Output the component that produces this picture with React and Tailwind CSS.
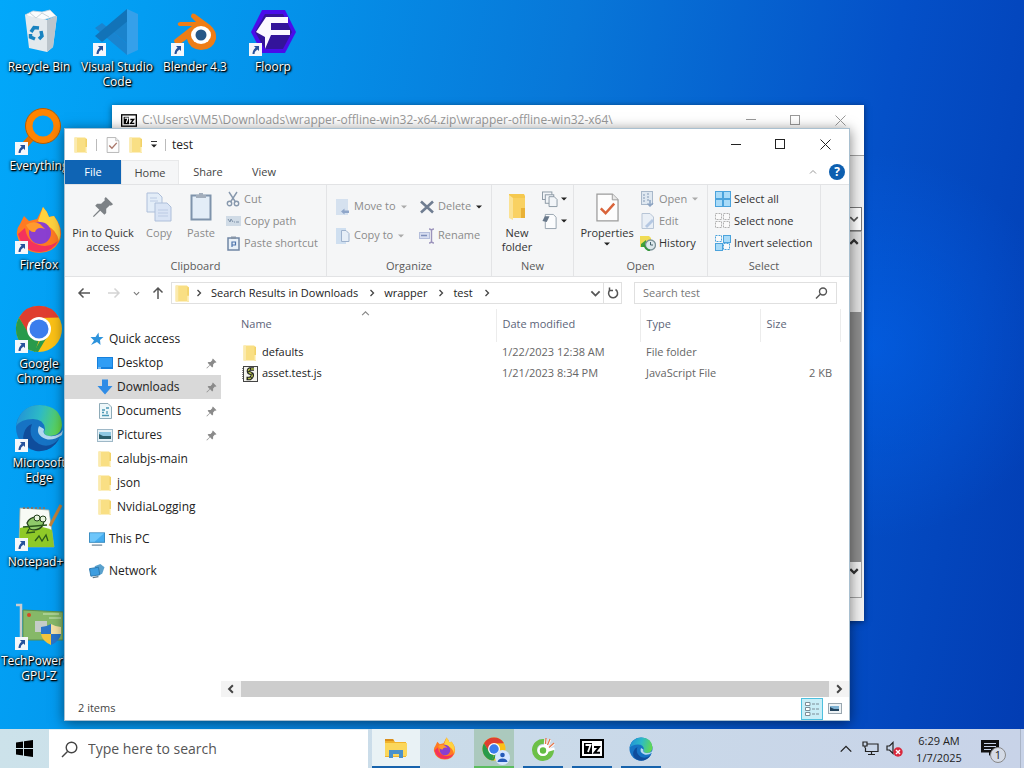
import React from 'react';

// Small shared glyphs
const Chevron = ({ dir = 'right', size = 8, color = '#444', width = 1.3 }) => {
  const paths = {
    right: 'M2.5 1 L5.5 4 L2.5 7',
    left: 'M5.5 1 L2.5 4 L5.5 7',
    down: 'M1 2.5 L4 5.5 L7 2.5',
    up: 'M1 5.5 L4 2.5 L7 5.5',
  };
  return (
    <svg width={size} height={size} viewBox="0 0 8 8" fill="none" stroke={color} strokeWidth={width}>
      <path d={paths[dir]} />
    </svg>
  );
};

const Caret = ({ color = '#222' }) => (
  <svg width="6" height="4" viewBox="0 0 6 4"><path d="M0 0.5 H6 L3 3.5 Z" fill={color} /></svg>
);

const FolderIcon = ({ size = 16 }) => (
  <svg width={size} height={size} viewBox="0 0 16 16">
    <path d="M1.500 0.500 H12 L14 2 V15.500 H1.500 Z" fill="#f9df84" />
    <path d="M1.500 0.500 H4 V15.500 H1.500 Z" fill="#fbeaae" />
    <path d="M12.500 2 H14 V15.500 H12.500 Z" fill="#f2d268" />
    <path d="M12.500 10 V15.500 H14 V10 Z" fill="#fff3c4" />
  </svg>
);

const SevenZipIcon = ({ width = 16, height = 13 }) => (
  <svg width={width} height={height} viewBox="0 0 24 19">
    <rect x="1" y="1" width="22" height="17" fill="#fff" stroke="#000" strokeWidth="2" />
    <rect x="4" y="4" width="8" height="11" fill="#000" />
    <path d="M5.5 6 H10.5 L8 13" fill="none" stroke="#fff" strokeWidth="1.8" />
    <path d="M14 8 H19 L14.5 13.8 H20" fill="none" stroke="#000" strokeWidth="2" />
  </svg>
);

const PinIcon = ({ size = 11, color = '#8a8a8a' }) => (
  <svg width={size} height={size} viewBox="0 0 24 24" fill={color}>
    <path d="M15 1 L23 9 L20.5 10.5 L19.5 10 L15.5 14 L15.5 18.5 L13.5 20.5 L9 16 L2 23 L1 22 L8 15 L3.5 10.5 L5.5 8.5 L10 8.5 L14 4.5 L13.5 3 Z" />
  </svg>
);

const PageCheckIcon = ({ width = 14, height = 16, check = '#d9643a' }) => (
  <svg width={width} height={height} viewBox="0 0 24 30">
    <path d="M1 1 H17 L23 7 V29 H1 Z" fill="#fdfdfd" stroke="#9b9b9b" strokeWidth="1.3" />
    <path d="M17 1 V7 H23" fill="#e8e8e8" stroke="#9b9b9b" />
    <path d="M5 16 L10 21 L19 11" fill="none" stroke={check} strokeWidth="2.6" />
  </svg>
);

// Desktop icons
const RecycleBinIcon = () => (
  <svg width="48" height="48" viewBox="0 0 48 48">
    <path d="M10 7 L18 3 L27 4 L35 2 L41 8 L25 13 Z" fill="#fafcfd" stroke="#c6d2da" strokeWidth="0.8" />
    <path d="M10 7 L32 12 L42 8 L38 39 L32 44 L14 40 Z" fill="#e3e9ed" />
    <path d="M32 12 L42 8 L38 39 L32 44 Z" fill="#bcc5cc" />
    <path d="M15 5 L21 10 L27 5 L34 9" fill="none" stroke="#c9d3d9" />
    <g fill="none" stroke="#1983c0" strokeWidth="3.5">
      <path d="M16 24 L19 19.500 L24 20" />
      <path d="M26 23 L27 28 L24 31" />
      <path d="M20 31 L15.500 29 L15.500 26" />
    </g>
  </svg>
);

const VsCodeIcon = () => (
  <svg width="48" height="48" viewBox="0 0 48 48">
    <path d="M20 24 L36 11 V37 Z" fill="#1a83cc" />
    <path d="M2 20 L9 15 L36 37 L34 47 Z" fill="#1a84cf" />
    <path d="M2 28 L9 34 L36 12 L34 1 Z" fill="#1273b8" />
    <path d="M34 1 L45 6 V42 L34 47 Z" fill="#35a0ea" />
  </svg>
);

const BlenderIcon = () => (
  <svg width="48" height="48" viewBox="0 0 48 48">
    <path d="M3 32 L21 18 L8 18 Q5 15 9 14 L25 14 L20 9 Q20 4 24 6 L39 17 Q46 23 45 31 Q42 42 30 42 Q18 41 16 31 L9 36 Q3 37 3 32 Z" fill="#ee7d16" />
    <ellipse cx="30" cy="27" rx="10" ry="9" fill="#fff" />
    <circle cx="30" cy="27" r="5.500" fill="#265787" />
  </svg>
);

const FloorpIcon = () => (
  <svg width="48" height="48" viewBox="0 0 48 48">
    <path d="M13 2 H36 L47 24 L36 45 H13 L2 24 Z" fill="#4a0cea" />
    <path d="M16 6 H34 L43 24 L34 41 H16 L6 24 Z" fill="#33149a" />
    <path d="M7 24 L17 9 H39 V15 H22 V22 H41 V27 H22 L16 41 V29 Z" fill="#fbf8ff" />
  </svg>
);

const EverythingIcon = () => (
  <svg width="48" height="48" viewBox="0 0 48 48">
    <path d="M18 29 L8 40" stroke="#e06f00" strokeWidth="7" />
    <circle cx="28" cy="19" r="14" fill="none" stroke="#ff8400" strokeWidth="7" />
    <circle cx="28" cy="19" r="17.500" fill="none" stroke="#b85c00" strokeWidth="1" />
  </svg>
);

const FirefoxIcon = ({ size = 48 }) => (
  <svg width={size} height={size} viewBox="0 0 48 48">
    <path d="M5 18 L9 10 L14 15 L22 13 L28 1 Q32 5 34 11 L39 10 Q50 24 44 36 Q38 47 24 47 Q6 46 2 29 Q1 23 5 18 Z" fill="#ff7a22" />
    <path d="M28 1 Q32 5 34 11 L39 10 Q48 22 44 35 Q41 23 32 20 L23 15 Z" fill="#ffd23e" />
    <path d="M3 28 Q8 46 26 46 Q38 45 43 35 Q34 42 24 39 Q12 36 10 22 Z" fill="#f4325d" />
    <circle cx="25" cy="27" r="11" fill="#8a3fd0" />
    <path d="M11 19 Q18 14 25 18 L30 23 Q22 20 20 26 Q15 27 11 19 Z" fill="#ff9a2e" />
  </svg>
);

const ChromeIcon = ({ size = 48 }) => (
  <svg width={size} height={size} viewBox="0 0 48 48">
    <circle cx="24" cy="24" r="23" fill="#fbc116" />
    <path d="M4 12.500 A23 23 0 0 1 44 12.500 L24 13 L14 30 Z" fill="#df3e30" />
    <path d="M4 12.500 L14.500 30 L24 35 L20 46.700 A23 23 0 0 1 4 12.500 Z" fill="#299a4b" />
    <path d="M33.500 29.500 L23 47 L19 46.500 L26 34 Z" fill="#299a4b" />
    <circle cx="24" cy="24" r="12" fill="#fff" />
    <circle cx="24" cy="24" r="9.500" fill="#3b7ded" />
  </svg>
);

const EdgeIcon = ({ size = 48, id }) => (
  <svg width={size} height={size} viewBox="0 0 48 48">
    <defs>
      <linearGradient id={id} x1="0" y1="0.300" x2="1" y2="0.500">
        <stop offset="0" stopColor="#2191d8" />
        <stop offset="0.500" stopColor="#2dbac6" />
        <stop offset="1" stopColor="#62d94f" />
      </linearGradient>
    </defs>
    <circle cx="24" cy="24" r="23" fill="#1673c4" />
    <path d="M1 22 Q5 1 25 1 Q46 2 47 21 Q46 32 34 32 Q27 31 30 25 Q29 15 18 15 Q6 15 1 22 Z" fill={`url(#${id})`} />
    <path d="M17 20 Q12 33 24 40 Q35 45 44 35 Q36 49 21 47 Q5 42 9 29 Q11 22 17 20 Z" fill="#0f4d9c" />
    <path d="M24 22 Q20 31 31 35 Q38 37 47 31 L48 26 Q44 33 34 32 Q27 31 29 25 Z" fill="#d9f1fb" opacity="0.8" />
  </svg>
);

const NotepadIcon = () => (
  <svg width="48" height="48" viewBox="0 0 48 48">
    <path d="M5 5 L34 7 L39 44 L4 44 Z" fill="#f8fbf5" stroke="#9aa79a" strokeWidth="0.8" />
    <path d="M5 25 Q20 20 37 27 L39 44 H4 Z" fill="#8fc928" />
    <path d="M12 20 Q15 13 24 14 Q31 16 28 22 Q23 29 15 26 Z" fill="#8fc96a" stroke="#23401b" strokeWidth="1.300" />
    <circle cx="22" cy="15" r="3" fill="#e8f5dd" stroke="#23401b" />
    <circle cx="28" cy="16" r="3" fill="#e8f5dd" stroke="#23401b" />
    <path d="M8 24 L32 22 M14 26 L12 30 L20 29 M20 38 L24 33 L27 38 L31 32 L33 38" fill="none" stroke="#2a5a1c" strokeWidth="1.300" />
    <path d="M46 2 L35 23" stroke="#c2823c" strokeWidth="3" />
    <path d="M8 5 H30" stroke="#777" strokeDasharray="2 2" strokeWidth="2" />
  </svg>
);

const GpuIcon = () => (
  <svg width="48" height="48" viewBox="0 0 48 48">
    <path d="M1 3 H6 V40" fill="none" stroke="#c9ccce" strokeWidth="2.500" />
    <path d="M8 8 L48 10 V38 L8 38 Z" fill="#86b868" stroke="#5d8f4c" />
    <rect x="20" y="19" width="12" height="11" fill="#c5ccc9" />
    <circle cx="14" cy="13" r="2" fill="#d44a25" />
    <path d="M28 12 H44 M34 16 H46" stroke="#b5d8a0" strokeWidth="1.500" />
    <path d="M36 22 Q31 25 26 25 V32 H36 Z" fill="#2b75c9" />
    <path d="M36 22 Q41 25 46 25 V32 H36 Z" fill="#f6e2a5" />
    <path d="M26 32 H36 V43 Q27 39 26 32 Z" fill="#f4c43c" />
    <path d="M46 32 H36 V43 Q45 39 46 32 Z" fill="#2b75c9" />
  </svg>
);

const ShortcutArrow = () => (
  <svg className="absolute bottom-0 left-0" width="13" height="13" viewBox="0 0 13 13">
    <rect width="13" height="13" fill="#f4f7fb" />
    <path d="M5 3 H10 V8 L8.400 6.400 Q5.500 8 5.500 11 H3.500 Q3.500 7 6.600 4.700 Z" fill="#27529c" />
  </svg>
);

const desktopIcons = [
  { label: 'Recycle Bin', icon: <RecycleBinIcon />, shortcut: false },
  { label: 'Everything', icon: <EverythingIcon />, shortcut: true },
  { label: 'Firefox', icon: <FirefoxIcon />, shortcut: true },
  { label: 'Google Chrome', icon: <ChromeIcon />, shortcut: true },
  { label: 'Microsoft Edge', icon: <EdgeIcon id="edge-desktop" />, shortcut: true },
  { label: 'Notepad++', icon: <NotepadIcon />, shortcut: true },
  { label: 'TechPowerUp GPU-Z', icon: <GpuIcon />, shortcut: true },
  { label: 'Visual Studio Code', icon: <VsCodeIcon />, shortcut: true, top: true },
  { label: 'Blender 4.3', icon: <BlenderIcon />, shortcut: true, top: true },
  { label: 'Floorp', icon: <FloorpIcon />, shortcut: true, top: true },
];

const DesktopIcons = () => (
  <div className="grid grid-flow-col grid-rows-[repeat(7,99px)] auto-cols-[78px] w-max pt-2">
    {desktopIcons.map((item) => (
      <button key={item.label} className={`flex flex-col items-center ${item.top ? 'row-start-1' : ''}`}>
        <span className="relative block h-12 w-12">
          {item.icon}
          {item.shortcut && <ShortcutArrow />}
        </span>
        <span className="mt-[3px] w-[76px] text-center text-xs leading-[15px] text-white [text-shadow:1px_1px_1px_#000,1px_1px_2px_#000,0_0_3px_#000]">
          {item.label}
        </span>
      </button>
    ))}
  </div>
);

// Window caption buttons
const CaptionButtons = ({ color }) => (
  <div className="flex h-full pr-px">
    <button aria-label="Minimize" className="flex w-[45px] items-center justify-center">
      <svg width="10" height="10" stroke={color}><path d="M0 4.5 H10" /></svg>
    </button>
    <button aria-label="Maximize" className="flex w-[45px] items-center justify-center">
      <svg width="11" height="11" fill="none" stroke={color}><rect x="0.500" y="0.500" width="9" height="9" /></svg>
    </button>
    <button aria-label="Close" className="flex w-[45px] items-center justify-center">
      <svg width="11" height="11" stroke={color}><path d="M0.500 0.500 L10.500 10.500 M10.500 0.500 L0.500 10.500" /></svg>
    </button>
  </div>
);

// 7-Zip window that sits behind the explorer
const SevenZipWindow = () => (
  <section className="absolute left-[112px] right-40 top-[105px] bottom-[147px] flex flex-col bg-[#f0f0f0] shadow-[0_1px_6px_rgba(0,0,0,0.5)]">
    <div className="flex h-[30px] items-center justify-between bg-white pl-[9px]">
      <div className="flex min-w-0 items-center gap-[5px]">
        <SevenZipIcon />
        <span className="whitespace-nowrap text-xs text-[#999]">
          C:\Users\VM5\Downloads\wrapper-offline-win32-x64.zip\wrapper-offline-win32-x64\
        </span>
      </div>
      <CaptionButtons color="#999" />
    </div>
    <div className="h-[21px] border-b border-[#a0a0a0] bg-white" />
    <div className="h-[51px]" />
    <div className="mx-0.5 flex h-6 items-center justify-end border border-[#777] bg-white pr-0.5">
      <Chevron dir="down" size={10} color="#555" />
    </div>
    <div className="mx-0.5 flex flex-1 flex-col border border-[#a0a0a0] bg-[#f0f0f0]">
      <div className="flex h-20 justify-end bg-[#e0e0e0] pr-0.5 pt-[5px]">
        <Chevron dir="up" size={10} color="#333" width={1.8} />
      </div>
      <div className="flex-1 bg-[#8c8c8c]" />
      <div className="flex h-[35px] justify-end pr-0.5 pt-1">
        <Chevron dir="down" size={10} color="#333" width={1.8} />
      </div>
    </div>
    <div className="h-[23px]" />
  </section>
);

// Ribbon parts
const RibbonGroup = ({ label, width, children }) => (
  <div className={`flex flex-col border-r border-[#e3e4e6] ${width}`}>
    <div className="flex flex-1 pt-[3px]">{children}</div>
    <div className="h-[18px] text-center leading-4 text-[#5a5a5a]">{label}</div>
  </div>
);

const LargeButton = ({ icon, label, width, dim, caret }) => (
  <button className={`flex flex-col items-center ${width} ${dim ? 'text-[#8b8b8b]' : 'text-[#333]'}`}>
    <span className="flex h-[38px] items-center justify-center">{icon}</span>
    <span className="text-center leading-[14px]">{label}</span>
    {caret && <span className="mt-0.5"><Caret /></span>}
  </button>
);

const SmallButton = ({ icon, label, dim, caret, height = 'h-[22px]' }) => (
  <button className={`flex items-center gap-[3px] whitespace-nowrap ${height} ${dim ? 'text-[#8b8b8b]' : 'text-[#333]'}`}>
    <span className="flex w-4 shrink-0 justify-center">{icon}</span>
    {label && <span>{label}</span>}
    {caret && <span className={label ? 'pl-0.5' : ''}><Caret color={caret} /></span>}
  </button>
);

const CopyIcon = () => (
  <svg width="26" height="30" viewBox="0 0 26 30" fill="#e3edf8" stroke="#aebfda">
    <path d="M1 1 H12 L16 5 V20 H1 Z" />
    <path d="M9 11 H21 L25 15 V29 H9 Z" fill="#d9e4f5" />
    <path d="M12 18 H22 M12 21 H22 M12 24 H22 M4 6 H11 M4 9 H12" stroke="#bccbe4" />
  </svg>
);

const PasteIcon = () => (
  <svg width="22" height="30" viewBox="0 0 22 30">
    <rect x="1.500" y="3.500" width="19" height="24" fill="#e3edf7" stroke="#7f93ab" strokeWidth="2" />
    <path d="M6 3 H9 V1 H13 V3 H16 V6 H6 Z" fill="#a3aebc" />
  </svg>
);

const CutIcon = () => (
  <svg width="14" height="16" viewBox="0 0 14 16" fill="none" stroke="#8798ad" strokeWidth="1.400">
    <path d="M3 1 L9.500 11 M11 1 L4.500 11" />
    <circle cx="3.500" cy="12.500" r="2.200" /><circle cx="10.500" cy="12.500" r="2.200" />
  </svg>
);

const CopyPathIcon = () => (
  <svg width="15" height="10" viewBox="0 0 15 10">
    <rect width="15" height="10" fill="#d0dbe6" />
    <path d="M2 3 L4 6 L5 3 L7 6 M8 6 H9 M10 6 H13" fill="none" stroke="#7e91a8" />
  </svg>
);

const PasteShortcutIcon = () => (
  <svg width="13" height="15" viewBox="0 0 13 15">
    <rect x="1" y="2" width="11" height="12" fill="#e8f0f8" stroke="#7086a5" strokeWidth="1.500" />
    <path d="M4 0.500 H9 V3 H4 Z" fill="#8795a7" />
    <path d="M5 11 V6 H8.500 V9 H5" fill="none" stroke="#4c73ab" strokeWidth="1.200" />
  </svg>
);

const MoveToIcon = () => (
  <svg width="14" height="16" viewBox="0 0 14 16">
    <rect width="12" height="16" fill="#d5e1ef" />
    <path d="M5 12.500 L8.500 9.500 V11.500 H13 V14 H8.500 V15.500 Z" fill="#8fa6c9" />
  </svg>
);

const CopyToIcon = () => (
  <svg width="14" height="16" viewBox="0 0 14 16">
    <rect width="10" height="16" fill="#cfdff0" />
    <path d="M5.500 2.500 H10 L13 5.500 V13.500 H5.500 Z" fill="#e6eef7" stroke="#9eb2cd" />
  </svg>
);

const DeleteIcon = () => (
  <svg width="14" height="14" viewBox="0 0 14 14" stroke="#6f7d91" strokeWidth="2.600">
    <path d="M1 1.500 L13 12.500 M13 1.500 L1 12.500" />
  </svg>
);

const RenameIcon = () => (
  <svg width="16" height="16" viewBox="0 0 16 16" fill="none">
    <rect x="0.500" y="4.500" width="10" height="6" fill="#d7def0" stroke="#b4bedb" />
    <path d="M2 7.500 H8" stroke="#7e8fba" strokeWidth="1.500" />
    <path d="M10 1 Q12.500 1 12.500 3 V13 Q12.500 15 10 15 M15 1 Q12.500 1 12.500 3 M15 15 Q12.500 15 12.500 13" stroke="#9b93bb" strokeWidth="1.400" />
  </svg>
);

const NewFolderIcon = () => (
  <svg width="20" height="28" viewBox="0 0 20 28">
    <path d="M2 1 H17 L18 3 V25 H2 Z" fill="#f5c94f" />
    <path d="M2 2 L6 5 V27 L2 25 Z" fill="#fbe294" />
    <path d="M6 5 H18 V25 H6 Z" fill="#f9d162" />
    <path d="M14 15 H18 V25 H14 Z" fill="#e9b136" />
  </svg>
);

const NewItemIcon = () => (
  <svg width="17" height="17" viewBox="0 0 17 17" fill="#f2f5f8" stroke="#8a97a3">
    <rect x="0.500" y="0.500" width="10" height="8" />
    <rect x="3.500" y="3.500" width="9" height="9" />
    <path d="M7.500 5.500 H13 L16 8.500 V16 H7.500 Z" />
  </svg>
);

const EasyAccessIcon = () => (
  <svg width="17" height="17" viewBox="0 0 17 17">
    <path d="M3.500 1 H12 L15 4 V16 H3.500 Z" fill="#fbfcfd" stroke="#93a0ac" />
    <path d="M0.500 8 L3 3 H8 L5 9 Z" fill="#68788a" />
  </svg>
);

const OpenIcon = () => (
  <svg width="14" height="16" viewBox="0 0 14 16">
    <rect x="0.500" y="0.500" width="11" height="13" fill="#dfe8f1" stroke="#a8b8ca" />
    <path d="M3 3 V11 M6 3 H9 M6 6 H9 M6 9 H9" stroke="#8399b5" strokeDasharray="2 1" />
    <path d="M9 9 V15 M6.500 12.500 L9 15 L12 12" fill="none" stroke="#8da4c2" strokeWidth="1.500" />
  </svg>
);

const EditIcon = () => (
  <svg width="14" height="16" viewBox="0 0 14 16">
    <path d="M1 0.500 H9 L12.500 4 V15.500 H1 Z" fill="#e9eff6" stroke="#b7c5d6" />
    <path d="M4 13 L11 6 L13 8 L6 15 Z" fill="#b5c8e2" />
  </svg>
);

const HistoryIcon = () => (
  <svg width="16" height="16" viewBox="0 0 16 16">
    <path d="M0 1 H9 L11 3 V12 H0 Z" fill="#f0dc55" />
    <path d="M1 9 L6 5 V12 H1 Z" fill="#41a03b" />
    <circle cx="10.500" cy="10" r="5" fill="#dce8ec" stroke="#7b9299" strokeWidth="1.300" />
    <path d="M10.500 7 V10 H13" fill="none" stroke="#49656f" />
    <path d="M4 10 Q6 15 10 15.500" fill="none" stroke="#35963d" strokeWidth="2" />
  </svg>
);

const SelectIcon = ({ mode }) => {
  const cells = [[0, 0], [8, 0], [0, 8], [8, 8]];
  return (
    <svg width="16" height="16" viewBox="0 0 16 16">
      {cells.map(([x, y], i) => {
        const on = mode === 'all' || (mode === 'invert' && (i === 1 || i === 2));
        return (
          <rect
            key={i}
            x={x + 0.5}
            y={y + 0.5}
            width={on ? 7 : 6}
            height={on ? 7 : 6}
            fill={on ? '#a9dbf8' : '#fafafa'}
            stroke={mode === 'none' ? '#b0b0b0' : '#4ba3dc'}
            strokeDasharray={on ? undefined : '2 1'}
          />
        );
      })}
    </svg>
  );
};

const Ribbon = () => (
  <div className="flex h-[93px] border-y border-[#e2e3e5] bg-[#f5f6f7]">
    <RibbonGroup label="Clipboard" width="w-[262px]">
      <LargeButton width="w-[76px]" icon={<PinIcon size={22} color="#7d8286" />} label={<>Pin to Quick<br />access</>} />
      <LargeButton width="w-9" dim icon={<CopyIcon />} label="Copy" />
      <LargeButton width="w-12" dim icon={<PasteIcon />} label="Paste" />
      <div className="flex flex-col">
        <SmallButton dim icon={<CutIcon />} label="Cut" />
        <SmallButton dim icon={<CopyPathIcon />} label="Copy path" />
        <SmallButton dim icon={<PasteShortcutIcon />} label="Paste shortcut" />
      </div>
    </RibbonGroup>
    <RibbonGroup label="Organize" width="w-[165px]">
      <div className="flex w-[84px] flex-col pl-2 pt-1">
        <SmallButton dim caret="#aaa" height="h-[29px]" icon={<MoveToIcon />} label="Move to" />
        <SmallButton dim caret="#aaa" height="h-[29px]" icon={<CopyToIcon />} label="Copy to" />
      </div>
      <div className="flex flex-col pl-2 pt-1">
        <SmallButton dim caret="#222" height="h-[29px]" icon={<DeleteIcon />} label="Delete" />
        <SmallButton dim height="h-[29px]" icon={<RenameIcon />} label="Rename" />
      </div>
    </RibbonGroup>
    <RibbonGroup label="New" width="w-[82px]">
      <LargeButton width="w-[50px]" icon={<NewFolderIcon />} label={<>New<br />folder</>} />
      <div className="flex flex-col">
        <SmallButton caret="#222" icon={<NewItemIcon />} />
        <SmallButton caret="#222" icon={<EasyAccessIcon />} />
      </div>
    </RibbonGroup>
    <RibbonGroup label="Open" width="w-[134px]">
      <LargeButton width="w-[66px]" caret icon={<PageCheckIcon width={23} height={29} />} label="Properties" />
      <div className="flex flex-col">
        <SmallButton dim caret="#aaa" icon={<OpenIcon />} label="Open" />
        <SmallButton dim icon={<EditIcon />} label="Edit" />
        <SmallButton icon={<HistoryIcon />} label="History" />
      </div>
    </RibbonGroup>
    <RibbonGroup label="Select" width="w-[113px]">
      <div className="flex flex-col pl-[7px]">
        <SmallButton icon={<SelectIcon mode="all" />} label="Select all" />
        <SmallButton icon={<SelectIcon mode="none" />} label="Select none" />
        <SmallButton icon={<SelectIcon mode="invert" />} label="Invert selection" />
      </div>
    </RibbonGroup>
  </div>
);

const TitleBar = () => (
  <div className="flex h-[31px] items-center justify-between">
    <div className="flex items-center pl-2">
      <FolderIcon />
      <span className="ml-[7px] h-3 border-l border-[#bbb]" />
      <span className="ml-[9px]"><PageCheckIcon check="#a9776a" /></span>
      <span className="ml-2"><FolderIcon /></span>
      <button aria-label="Customize toolbar" className="ml-[7px] flex flex-col items-center gap-0.5">
        <span className="h-px w-1.5 bg-[#333]" />
        <Caret />
      </button>
      <span className="ml-2 h-3 border-l border-[#bbb]" />
      <span className="ml-1.5 text-xs text-[#222]">test</span>
    </div>
    <CaptionButtons color="#222" />
  </div>
);

const Tabs = () => (
  <div className="flex h-6 items-stretch text-[#444]">
    <button className="w-14 bg-[#0f64b4] text-white">File</button>
    <button className="-mb-px w-[58px] border-x border-t border-[#e8e9ea] bg-[#f5f6f7]">Home</button>
    <button className="w-[58px]">Share</button>
    <button className="w-[54px]">View</button>
    <div className="ml-auto flex items-center gap-3 pr-1">
      <button aria-label="Collapse ribbon"><Chevron dir="up" color="#999" width={1} /></button>
      <button aria-label="Help" className="h-4 w-4 rounded-full bg-[#0d5fb0] text-xs font-bold leading-4 text-white">?</button>
    </div>
  </div>
);

const AddressBar = () => (
  <div className="flex h-8 items-center pr-3">
    <div className="flex w-[106px] items-center pl-3">
      <button aria-label="Back">
        <svg width="14" height="12" fill="none" stroke="#555" strokeWidth="1.500"><path d="M13 6 H2 M6.500 1.500 L2 6 L6.500 10.500" /></svg>
      </button>
      <button aria-label="Forward" className="ml-4">
        <svg width="14" height="12" fill="none" stroke="#d4d4d4" strokeWidth="1.500"><path d="M1 6 H12 M7.500 1.500 L12 6 L7.500 10.500" /></svg>
      </button>
      <button aria-label="Recent locations" className="ml-3"><Chevron dir="down" size={7} color="#777" /></button>
      <button aria-label="Up" className="ml-3">
        <svg width="12" height="14" fill="none" stroke="#555" strokeWidth="1.500"><path d="M6 13 V2 M1.500 6.500 L6 2 L10.500 6.500" /></svg>
      </button>
    </div>
    <div className="flex h-[22px] flex-1 items-center border border-[#e0e0e0] text-[#222]">
      <span className="ml-0.5"><FolderIcon size={17} /></span>
      <span className="ml-1"><Chevron /></span>
      <a href="#downloads" className="ml-2">Search Results in Downloads</a>
      <span className="ml-2.5"><Chevron /></span>
      <a href="#wrapper" className="ml-2">wrapper</a>
      <span className="ml-2.5"><Chevron /></span>
      <a href="#test" className="ml-2">test</a>
      <span className="ml-2.5"><Chevron /></span>
      <button aria-label="Previous locations" className="ml-auto mr-0.5"><Chevron dir="down" size={11} color="#555" /></button>
      <button aria-label="Refresh" className="flex h-full w-[18px] items-center justify-center border-l border-[#e0e0e0]">
        <svg width="12" height="12" fill="none" stroke="#555" strokeWidth="1.500">
          <path d="M8.500 2.500 A4.500 4.500 0 1 1 3 3" /><path d="M2.500 0.500 V3.500 H6" />
        </svg>
      </button>
    </div>
    <label className="ml-3 flex h-[22px] w-[203px] items-center border border-[#e0e0e0] pr-2">
      <input type="text" aria-label="Search test" placeholder="Search test" className="min-w-0 flex-1 bg-transparent pl-2 outline-none placeholder:text-[#777]" />
      <svg width="13" height="12" fill="none" stroke="#555" strokeWidth="1.400"><circle cx="8" cy="4.500" r="3.500" /><path d="M5.500 7 L1 11.500" /></svg>
    </label>
  </div>
);

// Navigation pane icons
const StarIcon = () => (
  <svg width="14" height="14" viewBox="0 0 14 14">
    <path d="M8.500 0.500 L9 5 H13.500 L10 8 L10.500 13 L7 10 L1 13 L4 8.500 L0.500 5 H5.500 Z" fill="#2d93dc" />
  </svg>
);

const DesktopIcon = () => (
  <svg width="16" height="13" viewBox="0 0 16 13">
    <rect width="16" height="12" fill="#1680dc" /><rect x="1" y="1" width="14" height="9" fill="#2f9df5" /><path d="M1 11 H4" stroke="#d5ecff" />
  </svg>
);

const DownloadsIcon = () => (
  <svg width="16" height="16" viewBox="0 0 16 16">
    <path d="M5 0.500 H11 V7 H15.500 L8 15.500 L0.500 7 H5 Z" fill="#2f8ce6" />
  </svg>
);

const DocumentsIcon = () => (
  <svg width="13" height="16" viewBox="0 0 13 16">
    <path d="M0.500 0.500 H9 L12.500 4 V15.500 H0.500 Z" fill="#edf7fa" stroke="#8eabb8" />
    <path d="M3 7 H6 M3 9.500 H5 M3 12.500 H10 M7 5 H10 M8 8 V11" stroke="#4b98b4" strokeWidth="1.300" />
  </svg>
);

const PicturesIcon = () => (
  <svg width="16" height="13" viewBox="0 0 16 13">
    <rect x="0.500" y="0.500" width="15" height="12" fill="#e6f1f7" stroke="#9eb8c7" />
    <rect x="2" y="3" width="12" height="7" fill="#8fc8e2" />
    <path d="M2 10 V5 L6 7 L14 7 V10 Z" fill="#2b5e6b" />
  </svg>
);

const ThisPcIcon = () => (
  <svg width="17" height="16" viewBox="0 0 17 16">
    <rect x="0.500" y="1.500" width="16" height="10" fill="#45adf0" stroke="#3587bd" />
    <path d="M1 2 H16 L6 11 H1 Z" fill="#6ec6fa" />
    <path d="M3 14.500 H14" stroke="#8095a4" strokeWidth="1.500" />
  </svg>
);

const NetworkIcon = () => (
  <svg width="17" height="16" viewBox="0 0 17 16">
    <path d="M6 3 L12 0.500 L16.500 4 L14 11 L9 13 Z" fill="#5aa1cd" />
    <path d="M0.500 5.500 L10 4 L11.500 12 L2 13.500 Z" fill="#3c9de0" stroke="#2a78af" />
    <path d="M4 15 L10 14" stroke="#607786" strokeWidth="1.500" />
  </svg>
);

const navItems = [
  { label: 'Quick access', icon: <StarIcon />, root: true },
  { label: 'Desktop', icon: <DesktopIcon />, pinned: true },
  { label: 'Downloads', icon: <DownloadsIcon />, pinned: true, active: true },
  { label: 'Documents', icon: <DocumentsIcon />, pinned: true },
  { label: 'Pictures', icon: <PicturesIcon />, pinned: true },
  { label: 'calubjs-main', icon: <FolderIcon /> },
  { label: 'json', icon: <FolderIcon /> },
  { label: 'NvidiaLogging', icon: <FolderIcon /> },
  { label: 'This PC', icon: <ThisPcIcon />, root: true, gap: true },
  { label: 'Network', icon: <NetworkIcon />, root: true, gap: true },
];

const NavPane = () => (
  <nav className="w-[156px] shrink-0 pt-[18px]">
    {navItems.map((item) => (
      <a
        key={item.label}
        href={`#${item.label}`}
        className={`flex h-6 items-center gap-1 pr-1 text-xs text-[#222] ${item.root ? 'pl-6' : 'pl-8'} ${item.gap ? 'mt-2' : ''} ${item.active ? 'bg-[#d9d9d9]' : ''}`}
      >
        <span className="flex w-4 shrink-0 justify-center">{item.icon}</span>
        <span className="flex-1 whitespace-nowrap">{item.label}</span>
        {item.pinned && <PinIcon />}
      </a>
    ))}
  </nav>
);

const ScriptIcon = () => (
  <svg width="16" height="16" viewBox="0 0 16 16">
    <rect x="1.500" y="0.500" width="14" height="15" fill="#f4f4ee" stroke="#444" />
    <path d="M0.500 2 V14" stroke="#888" strokeDasharray="1 1" />
    <path d="M12 3 H8 Q5.500 4 7 6.500 L10 8 Q11 10.500 8 12.500 H4.500" fill="none" stroke="#222" strokeWidth="3.600" />
    <path d="M12 3 H8 Q5.500 4 7 6.500 L10 8 Q11 10.500 8 12.500 H4.500" fill="none" stroke="#b3c04a" strokeWidth="1.500" strokeDasharray="3 1" />
  </svg>
);

const files = [
  { name: 'defaults', icon: <FolderIcon />, date: '1/22/2023 12:38 AM', type: 'File folder', size: '' },
  { name: 'asset.test.js', icon: <ScriptIcon />, date: '1/21/2023 8:34 PM', type: 'JavaScript File', size: '2 KB' },
];

const FileList = () => (
  <div className="flex min-w-0 flex-1 flex-col">
    <table className="w-full table-fixed border-collapse text-left text-[#666]">
      <colgroup>
        <col />
        <col className="w-36" />
        <col className="w-[120px]" />
        <col className="w-20" />
        <col className="w-[9px]" />
      </colgroup>
      <thead>
        <tr className="h-[33px] text-[#5c6478]">
          <th className="relative pb-[3px] pl-5 font-normal">
            Name
            <span className="absolute left-[140px] top-0"><Chevron dir="up" size={9} color="#888" width={1} /></span>
          </th>
          <th className="border-l border-[#ececec] pb-[3px] pl-1.5 font-normal">Date modified</th>
          <th className="border-l border-[#ececec] pb-[3px] pl-1.5 font-normal">Type</th>
          <th className="border-x border-[#ececec] pb-[3px] pl-1.5 font-normal">Size</th>
          <th />
        </tr>
      </thead>
      <tbody>
        {files.map((file) => (
          <tr key={file.name} className="h-[21px]">
            <td className="pl-[21px]">
              <span className="flex items-center gap-1 text-[#222]">
                {file.icon}
                {file.name}
              </span>
            </td>
            <td className="pl-1.5">{file.date}</td>
            <td className="pl-1.5">{file.type}</td>
            <td className="pr-2 text-right">{file.size}</td>
            <td />
          </tr>
        ))}
      </tbody>
    </table>
    <div className="mt-auto flex h-4 items-center bg-[#f3f3f3]">
      <button aria-label="Scroll left" className="flex w-5 justify-center"><Chevron dir="left" size={10} width={1.6} /></button>
      <div className="h-4 flex-1 bg-[#cdcdcd]" />
      <button aria-label="Scroll right" className="flex w-5 justify-center"><Chevron size={10} width={1.6} /></button>
    </div>
  </div>
);

const StatusBar = () => (
  <div className="flex h-[23px] items-center justify-between pl-[13px] pr-1.5 text-[#444]">
    <span>2 items</span>
    <div className="flex items-center gap-1">
      <button aria-label="Details view" className="flex h-[22px] w-[22px] items-center justify-center border border-[#4fc0de] bg-[#c9eef7]">
        <svg width="16" height="16" fill="none" stroke="#7c8c96">
          <path d="M1.500 1.500 H6 V4.500 H1.500 Z M1.500 6.500 H6 V9.500 H1.500 Z M1.500 11.500 H6 V14.500 H1.500 Z" fill="#fff" />
          <path d="M8 3 H15 M8 8 H15 M8 13 H15" strokeDasharray="3 1" />
        </svg>
      </button>
      <button aria-label="Large icons view" className="flex w-4 justify-center">
        <svg width="14" height="11">
          <rect x="0.500" y="0.500" width="13" height="10" fill="#eef3f6" stroke="#9aa7b0" />
          <rect x="2" y="3" width="9" height="5" fill="#7fb2d3" /><path d="M2 8 V4 L6 6 H11 V8 Z" fill="#24435c" />
        </svg>
      </button>
    </div>
  </div>
);

const ExplorerWindow = () => (
  <section className="absolute left-16 right-[174px] top-32 bottom-[47px] flex flex-col border border-[#a9c0d0] bg-white text-[11px] shadow-[0_2px_12px_rgba(0,0,0,0.5)]">
    <TitleBar />
    <Tabs />
    <Ribbon />
    <AddressBar />
    <div className="flex min-h-0 flex-1">
      <NavPane />
      <FileList />
    </div>
    <StatusBar />
  </section>
);

// Taskbar
const ExplorerTaskIcon = () => (
  <svg width="24" height="22" viewBox="0 0 24 22">
    <path d="M1 1 H9 L11 4 H22 V19 H1 Z" fill="#f1b32b" />
    <path d="M1 1 H9 L10 3 H1 Z" fill="#d98e1c" />
    <path d="M1 5 H23 V18 H1 Z" fill="#fbd75b" />
    <path d="M5 12 H19 V20 H15 V16 H9 V20 H5 Z" fill="#4a91ca" />
  </svg>
);

const ChromeProfileIcon = () => (
  <span className="relative">
    <ChromeIcon size={24} />
    <svg className="absolute -bottom-1 -right-1" width="15" height="15" viewBox="0 0 15 15">
      <circle cx="7.500" cy="7.500" r="7.500" fill="#d5e6ff" />
      <circle cx="7.500" cy="5" r="2.300" fill="#2459b8" />
      <path d="M2.500 12 Q3 8.500 7.500 8.500 Q12 8.500 12.500 12 Z" fill="#2459b8" />
    </svg>
  </span>
);

const CocCocIcon = () => (
  <svg width="24" height="24" viewBox="0 0 24 24" fill="none">
    <path d="M13 4.500 A8.500 8.500 0 1 0 20.500 13" stroke="#6cc048" strokeWidth="5" />
    <circle cx="12" cy="13.500" r="5.500" fill="#fff" /><circle cx="12" cy="13.500" r="3.200" fill="#63bd44" />
    <path d="M14 10 L15 2 M15.500 11 L19 2.500 M16.500 12 L23 6.500 M17 13.500 L23.500 11.500" stroke="#fff" strokeWidth="2.500" />
    <path d="M14.500 7 L15 1 M16.500 8 L19 2 M18 10.500 L23 6" stroke="#e2764d" strokeWidth="1.300" />
  </svg>
);

const taskItems = [
  { label: 'File Explorer', icon: <ExplorerTaskIcon />, tile: 'w-12 bg-[#e9f2f5]', bar: 'bg-[#1763ac]' },
  { label: 'Firefox', icon: <FirefoxIcon size={23} />, tile: 'w-12', bar: '' },
  { label: 'Google Chrome', icon: <ChromeProfileIcon />, tile: 'w-10 bg-[#abc9bd]', bar: 'bg-[#5bbd5f]' },
  { label: 'Coc Coc', icon: <CocCocIcon />, tile: 'w-10', bar: 'bg-[#1763ac]' },
  { label: '7-Zip', icon: <SevenZipIcon width={24} height={19} />, tile: 'w-10', bar: 'bg-[#1763ac]' },
  { label: 'Microsoft Edge', icon: <EdgeIcon size={24} id="edge-task" />, tile: 'w-10', bar: 'bg-[#1763ac]' },
];

const Taskbar = () => (
  <footer className="absolute inset-x-0 bottom-0 flex h-[39px] bg-linear-to-r from-[#cce2ea] to-[#c8d3e8]">
    <button aria-label="Start" className="flex w-[49px] items-center justify-center">
      <svg width="17" height="17" viewBox="0 0 17 17"><path d="M0 2.500 L7 1.500 V8 H0 Z M8 1.300 L17 0 V8 H8 Z M0 9 H7 V15.500 L0 14.500 Z M8 9 H17 V17 L8 15.700 Z" /></svg>
    </button>
    <label className="flex w-[319px] items-center border-t border-[#e5eef2] bg-white pl-3">
      <svg width="17" height="17" fill="none" stroke="#444" strokeWidth="1.400"><circle cx="10.500" cy="6.500" r="5.300" /><path d="M6.500 10.500 L1 16" /></svg>
      <input type="text" aria-label="Type here to search" placeholder="Type here to search" className="ml-2.5 min-w-0 flex-1 bg-transparent text-sm outline-none placeholder:text-[#555]" />
    </label>
    <div className="ml-[3px] flex">
      {taskItems.map((item) => (
        <div key={item.label} className="flex w-[49px] justify-center">
          <button aria-label={item.label} className={`flex flex-col items-center ${item.tile}`}>
            <span className="flex flex-1 items-center justify-center pt-0.5">{item.icon}</span>
            <span className={`h-0.5 w-full ${item.bar}`} />
          </button>
        </div>
      ))}
    </div>
    <div className="ml-auto flex items-center">
      <button aria-label="Show hidden icons" className="flex w-6 justify-center"><Chevron dir="up" size={14} color="#222" width={0.8} /></button>
      <button aria-label="Network" className="flex w-6 justify-center">
        <svg width="17" height="15" viewBox="0 0 17 15" fill="none" stroke="#222" strokeWidth="1.200">
          <path d="M5 3 H16 V10.500 H3.500 V7 M6 13.500 H13 M9.500 10.500 V13.500" />
          <path d="M1 1 H5 V5 H1 Z M3 5 V7" />
        </svg>
      </button>
      <button aria-label="Volume muted" className="flex w-6 justify-center">
        <svg width="17" height="16" viewBox="0 0 17 16" fill="none">
          <path d="M1 5 H3.500 L7 1.500 V12.500 L3.500 9 H1 Z" stroke="#222" strokeWidth="1.200" />
          <circle cx="12" cy="11" r="4.700" fill="#d9283c" />
          <path d="M10 9 L14 13 M14 9 L10 13" stroke="#fff" strokeWidth="1.400" />
        </svg>
      </button>
      <div className="w-[66px] text-center text-[11px] leading-[17px] text-[#222]">
        <div>6:29 AM</div>
        <div>1/7/2025</div>
      </div>
      <button aria-label="Notifications" className="relative flex w-9 justify-center">
        <svg width="18" height="17" viewBox="0 0 18 17">
          <path d="M0 0 H18 V12.500 H11 L8 16 V12.500 H0 Z" fill="#111" />
          <path d="M3 3.500 H15 M3 6.500 H15 M3 9.500 H10" stroke="#c8d3e8" />
        </svg>
        <span className="absolute -bottom-1.5 right-0.5 h-4 w-4 rounded-full border border-[#888] bg-[#d5dbe6] text-center text-[11px] leading-[14px] text-[#222]">1</span>
      </button>
      <div className="ml-3 h-[39px] w-1 border-l border-[#aab4c6]" />
    </div>
  </footer>
);

const App = () => {
  return (
    <main className="relative h-screen w-full overflow-hidden bg-[radial-gradient(circle_at_85%_45%,rgba(0,110,255,0.4),transparent_20%),linear-gradient(100deg,#02a8fa_0%,#0492ea_25%,#0877d8_50%,#0450c8_78%,#023cb2_100%)] font-['Open_Sans','Noto_Sans',sans-serif]">
      <DesktopIcons />
      <SevenZipWindow />
      <ExplorerWindow />
      <Taskbar />
    </main>
  );
};

export default App;
